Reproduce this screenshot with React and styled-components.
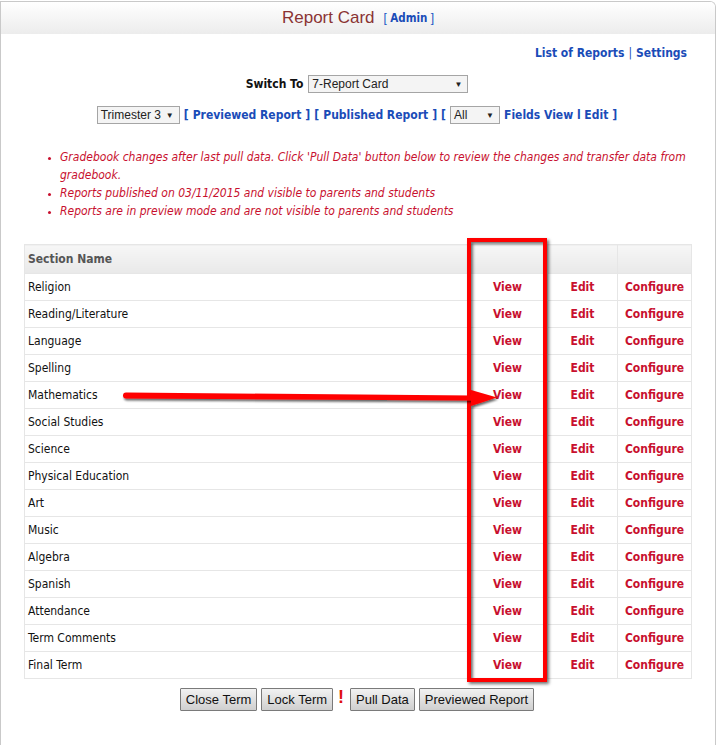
import React from "react";
import styled, { createGlobalStyle } from "styled-components";

const GlobalStyle = createGlobalStyle`
  body {
    margin: 0;
    background: #fff;
    font-family: "DejaVu Sans Condensed", "DejaVu Sans", Verdana, sans-serif;
  }
`;

const Panel = styled.div`
  position: relative;
  box-sizing: border-box;
  width: 716px;
  height: 745px;
  margin-top: 1px;
  border: 1px solid #c9c9c9;
  border-bottom: none;
  border-top-right-radius: 6px;
  overflow: hidden;
`;

const Header = styled.div`
  height: 32px;
  display: flex;
  align-items: center;
  justify-content: center;
  gap: 9px;
  background: linear-gradient(#ffffff, #ececec);
`;

const Title = styled.span`
  font-family: "Liberation Sans", Arial, sans-serif;
  font-size: 17px;
  color: #8a3333;
`;

const Bracket = styled.span`
  font-size: 12px;
  color: #1a56c4;
  font-family: "Liberation Sans", Arial, sans-serif;
  b {
    font-family: "DejaVu Sans Condensed", "DejaVu Sans", sans-serif;
    font-size: 11.5px;
    color: #1a4cb8;
  }
`;

const Body = styled.div`
  padding: 10px 25px 0 23px;
`;

const TopLinks = styled.div`
  display: flex;
  justify-content: flex-end;
  align-items: center;
  gap: 4px;
  padding-right: 3px;
  height: 18px;
  font-size: 12px;
  color: #1a4cb8;
`;

const Link = styled.a`
  font-weight: bold;
  color: ${(p) => (p.$red ? "#c8102e" : "#1a4cb8")};
  text-decoration: none;
  font-size: 12px;
`;

const Row = styled.div`
  display: flex;
  justify-content: center;
  align-items: center;
  gap: 4px;
  height: 18px;
  margin-top: ${(p) => p.$mt}px;
  font-size: 12px;
  font-weight: bold;
  color: #1a4cb8;
`;

const Label = styled.span`
  font-weight: bold;
  color: #111;
  font-size: 12px;
  margin-right: 1px;
`;

const Select = styled.div`
  box-sizing: border-box;
  width: ${(p) => p.$w}px;
  height: 18px;
  border: 1px solid #a5a5a5;
  background: #f4f4f4;
  display: flex;
  align-items: center;
  justify-content: space-between;
  padding: 0 5px 0 3px;
  font-family: "Liberation Sans", Arial, sans-serif;
  font-weight: normal;
  font-size: 12px;
  color: #222;
  &::after {
    content: "▼";
    font-size: 8px;
    color: #222;
  }
`;

const Notices = styled.ul`
  margin: 24px 0 0 0;
  padding: 0 0 0 36px;
  list-style: disc;
  color: #c8102e;
  font-size: 12px;
  font-style: italic;
  line-height: 18px;
  li::marker {
    font-size: 9px;
  }
`;

const Table = styled.table`
  margin-top: 24px;
  width: 668px;
  border-collapse: collapse;
  font-size: 12px;
`;

const Th = styled.th`
  height: 28px;
  padding: 0 3px;
  text-align: left;
  font-weight: bold;
  color: #555;
  background: linear-gradient(#f7f7f7, #e9e9e9);
  border: 1px solid #e6e6e6;
  border-bottom: none;
  width: ${(p) => p.$w || "auto"};
`;

const Td = styled.td`
  height: 26px;
  padding: 0 3px;
  border: 1px solid #e6e6e6;
  color: #111;
  text-align: ${(p) => (p.$center ? "center" : "left")};
`;

const Buttons = styled.div`
  display: flex;
  justify-content: center;
  align-items: center;
  gap: 4px;
  margin-top: 8px;
`;

const Button = styled.button`
  height: 23px;
  padding: 0 5px;
  border: 1px solid #7a7a7a;
  border-radius: 1px;
  background: linear-gradient(#f2f2f2, #cfcfcf);
  font-family: "Liberation Sans", Arial, sans-serif;
  font-size: 13px;
  color: #111;
`;

const Bang = styled.span`
  color: #e01010;
  font-weight: bold;
  font-size: 18px;
  font-family: "Liberation Sans", Arial, sans-serif;
  margin: 0 2px 4px 1px;
`;

const Highlight = styled.div`
  position: absolute;
  left: 466px;
  top: 236px;
  width: 72px;
  height: 436px;
  border: 4px solid #ff0000;
  box-shadow: 2px 2px 3px rgba(0, 0, 0, 0.55),
    inset 2px 2px 3px rgba(0, 0, 0, 0.55);
  pointer-events: none;
`;

const Arrow = styled.svg`
  position: absolute;
  left: 115px;
  top: 380px;
  overflow: visible;
  pointer-events: none;
`;

const sections = [
  "Religion",
  "Reading/Literature",
  "Language",
  "Spelling",
  "Mathematics",
  "Social Studies",
  "Science",
  "Physical Education",
  "Art",
  "Music",
  "Algebra",
  "Spanish",
  "Attendance",
  "Term Comments",
  "Final Term",
];

export default function App() {
  return (
    <>
      <GlobalStyle />
      <Panel>
        <Header>
          <Title>Report Card</Title>
          <Bracket>
            [ <b>Admin</b> ]
          </Bracket>
        </Header>
        <Body>
          <TopLinks>
            <Link>List of Reports</Link>
            <span>|</span>
            <Link>Settings</Link>
          </TopLinks>
          <Row $mt={13}>
            <Label>Switch To</Label>
            <Select $w={160}>7-Report Card</Select>
          </Row>
          <Row $mt={13}>
            <Select $w={83}>Trimester 3</Select>
            <span>[</span>
            <Link>Previewed Report</Link>
            <span>]</span>
            <span>[</span>
            <Link>Published Report</Link>
            <span>]</span>
            <span>[</span>
            <Select $w={50}>All</Select>
            <Link>Fields View l Edit</Link>
            <span>]</span>
          </Row>
          <Notices>
            <li>
              Gradebook changes after last pull data. Click 'Pull Data' button
              below to review the changes and transfer data from gradebook.
            </li>
            <li>Reports published on 03/11/2015 and visible to parents and students</li>
            <li>Reports are in preview mode and are not visible to parents and students</li>
          </Notices>
          <Table>
            <thead>
              <tr>
                <Th>Section Name</Th>
                <Th $w="73px" />
                <Th $w="63px" />
                <Th $w="67px" />
              </tr>
            </thead>
            <tbody>
              {sections.map((s) => (
                <tr key={s}>
                  <Td>{s}</Td>
                  <Td $center>
                    <Link $red>View</Link>
                  </Td>
                  <Td $center>
                    <Link $red>Edit</Link>
                  </Td>
                  <Td $center>
                    <Link $red>Configure</Link>
                  </Td>
                </tr>
              ))}
            </tbody>
          </Table>
          <Buttons>
            <Button>Close Term</Button>
            <Button>Lock Term</Button>
            <Bang>!</Bang>
            <Button>Pull Data</Button>
            <Button>Previewed Report</Button>
          </Buttons>
        </Body>
        <Highlight />
        <Arrow width="385" height="30" viewBox="0 0 385 30">
          <defs>
            <filter id="shadow" x="-5%" y="-50%" width="110%" height="200%">
              <feDropShadow dx="1" dy="2" stdDeviation="1.2" floodColor="#000" floodOpacity="0.6" />
            </filter>
          </defs>
          <g filter="url(#shadow)">
            <path
              d="M10 10.5 L355 13.5 L355 8 L381 15.5 L355 24 L355 18.5 L10 16.5 A3 3 0 0 1 10 10.5 Z"
              fill="#ff0000"
            />
          </g>
        </Arrow>
      </Panel>
    </>
  );
}
